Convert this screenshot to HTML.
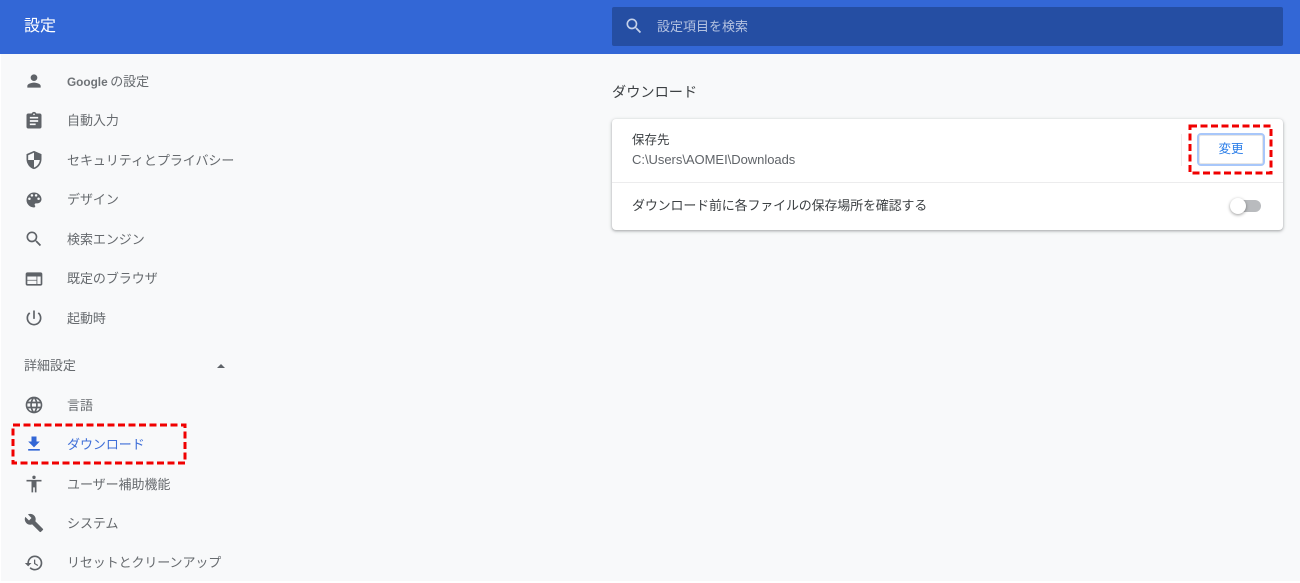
<!DOCTYPE html>
<html lang="ja">
<head>
<meta charset="utf-8">
<title>設定</title>
<style>
html,body{margin:0;padding:0}
body{width:1300px;height:583px;overflow:hidden;background:#f8f9fa;position:relative;font-family:"Liberation Sans","Noto Sans CJK JP",sans-serif;color:#5f6368}
.abs{position:absolute}
.hdr{left:0;top:0;width:1300px;height:54px;background:#3367d6}
.title{left:24px;top:16px;font-size:16px;line-height:22px;color:#fff}
.search{left:612px;top:7px;width:671px;height:39px;background:#254ea3;border-radius:2px}
.ph{left:657px;top:18px;font-size:13px;line-height:18px;color:#b4c2e0}
.it{position:absolute;left:67px;font-size:13px;line-height:18px;letter-spacing:-.05px;color:#666a6e;white-space:nowrap}
.ic{position:absolute;left:24px;width:20px;height:20px;fill:#5f6368}
.h2{left:612px;top:83px;font-size:14.2px;line-height:20px;color:#3c4043}
.card{left:612px;top:119px;width:671px;height:111px;background:#fff;border-radius:4px;box-shadow:0 1px 2px rgba(60,64,67,.3),0 1px 3px 1px rgba(60,64,67,.15)}
.t1{left:632px;font-size:12.5px;line-height:18px;color:#3c4043;white-space:nowrap}
.btn{left:1197px;top:133px;width:64px;height:29px;border:2px solid #a8c7fa;border-radius:4px;background:#fff;color:#2a7de8;font-size:12.5px;line-height:29px;text-align:center;box-sizing:content-box;box-shadow:inset 0 0 0 1px #e6e6e6}
</style>
</head>
<body>
<div class="abs hdr"></div>
<div class="abs title">設定</div>
<div class="abs search"></div>
<svg class="abs" style="left:624px;top:16px;fill:#c6d2ea" width="20" height="20" viewBox="0 0 24 24"><path d="M15.5 14h-.79l-.28-.27A6.47 6.47 0 0 0 16 9.5 6.5 6.5 0 1 0 9.500 16c1.610 0 3.090-.59 4.230-1.570l.27.28v.79l5 4.990L20.490 19l-4.990-5zm-6 0C7.010 14 5 11.990 5 9.500S7.010 5 9.500 5 14 7.010 14 9.500 11.990 14 9.500 14z"/></svg>
<div class="abs ph">設定項目を検索</div>

<svg class="ic" style="top:71px" viewBox="0 0 24 24"><path d="M12 12c2.210 0 4-1.790 4-4s-1.790-4-4-4-4 1.790-4 4 1.790 4 4 4zm0 2c-2.670 0-8 1.340-8 4v2h16v-2c0-2.660-5.330-4-8-4z"/></svg>
<div class="it" style="top:73px;word-spacing:-1px"><b style="font-weight:700;font-size:11.8px;letter-spacing:0;color:#6f7377">Google</b> の設定</div>

<svg class="ic" style="top:111px" viewBox="0 0 24 24"><path d="M19 3h-4.180C14.400 1.840 13.300 1 12 1s-2.400.84-2.820 2H5c-1.100 0-2 .9-2 2v14c0 1.100.9 2 2 2h14c1.100 0 2-.9 2-2V5c0-1.100-.9-2-2-2zm-7 0c.55 0 1 .45 1 1s-.45 1-1 1-1-.45-1-1 .45-1 1-1zm2 14H7v-2h7v2zm3-4H7v-2h10v2zm0-4H7V7h10v2z"/></svg>
<div class="it" style="top:112px">自動入力</div>

<svg class="ic" style="top:150px" viewBox="0 0 24 24"><path d="M12 1 3 5v6c0 5.550 3.840 10.740 9 12 5.160-1.260 9-6.450 9-12V5l-9-4zm0 10.990h7c-.53 4.120-3.280 7.790-7 8.940V12H5V6.300l7-3.110v8.800z"/></svg>
<div class="it" style="top:152px">セキュリティとプライバシー</div>

<svg class="ic" style="top:190px" viewBox="0 0 24 24"><path d="M12 3a9 9 0 0 0 0 18c.83 0 1.500-.67 1.500-1.500 0-.39-.15-.74-.39-1.010-.23-.26-.38-.61-.38-.99 0-.83.67-1.500 1.500-1.500H16c2.760 0 5-2.240 5-5 0-4.420-4.030-8-9-8zm-5.500 9a1.500 1.500 0 1 1 0-3 1.500 1.500 0 0 1 0 3zm3-4a1.500 1.500 0 1 1 0-3 1.500 1.500 0 0 1 0 3zm5 0a1.500 1.500 0 1 1 0-3 1.500 1.500 0 0 1 0 3zm3 4a1.500 1.500 0 1 1 0-3 1.500 1.500 0 0 1 0 3z"/></svg>
<div class="it" style="top:191px">デザイン</div>

<svg class="ic" style="top:229px" viewBox="0 0 24 24"><path d="M15.500 14h-.79l-.28-.27A6.470 6.470 0 0 0 16 9.500 6.500 6.500 0 1 0 9.500 16c1.610 0 3.090-.59 4.230-1.570l.27.28v.79l5 4.990L20.490 19l-4.990-5zm-6 0C7.010 14 5 11.990 5 9.500S7.010 5 9.500 5 14 7.010 14 9.500 11.990 14 9.500 14z"/></svg>
<div class="it" style="top:231px">検索エンジン</div>

<svg class="ic" style="top:269px" viewBox="0 0 24 24"><path d="M20 4H4c-1.100 0-2 .9-2 2v12c0 1.100.9 2 2 2h16c1.100 0 2-.9 2-2V6c0-1.100-.9-2-2-2zm-5 14H4v-4h11v4zm0-5H4V9h11v4zm5 5h-4V9h4v9z"/></svg>
<div class="it" style="top:270px">既定のブラウザ</div>

<svg class="ic" style="top:308px" viewBox="0 0 24 24"><path d="M13 3h-2v10h2V3zm4.830 2.170-1.420 1.420A6.920 6.920 0 0 1 19 12c0 3.870-3.130 7-7 7s-7-3.130-7-7c0-2.280 1.090-4.300 2.580-5.420L6.170 5.170A8.930 8.930 0 0 0 3 12a9 9 0 0 0 18 0c0-2.740-1.230-5.180-3.170-6.830z"/></svg>
<div class="it" style="top:310px">起動時</div>

<div class="it" style="left:24px;top:357px">詳細設定</div>
<svg class="abs" style="left:216px;top:363px" width="10" height="6" viewBox="0 0 10 6"><path d="M1 5 5 1l4 4z" fill="#5f6368"/></svg>

<svg class="ic" style="top:395px" viewBox="0 0 24 24"><path d="M11.990 2C6.470 2 2 6.480 2 12s4.470 10 9.990 10C17.520 22 22 17.520 22 12S17.520 2 11.990 2zm6.930 6h-2.950a15.650 15.650 0 0 0-1.380-3.560A8.030 8.030 0 0 1 18.920 8zM12 4.040c.83 1.200 1.480 2.530 1.910 3.960h-3.820c.43-1.430 1.080-2.760 1.910-3.960zM4.260 14C4.100 13.360 4 12.690 4 12s.1-1.360.26-2h3.380c-.08.66-.14 1.320-.14 2s.06 1.340.14 2H4.260zm.82 2h2.950c.32 1.250.78 2.450 1.380 3.560A7.987 7.987 0 0 1 5.080 16zm2.950-8H5.080a7.987 7.987 0 0 1 4.330-3.560A15.650 15.650 0 0 0 8.030 8zM12 19.960c-.83-1.200-1.480-2.530-1.910-3.960h3.820c-.43 1.430-1.080 2.760-1.910 3.960zM14.340 14H9.660c-.09-.66-.16-1.320-.16-2s.07-1.350.16-2h4.680c.09.65.16 1.320.16 2s-.07 1.340-.16 2zm.25 5.560c.6-1.110 1.060-2.310 1.380-3.560h2.950a8.030 8.030 0 0 1-4.330 3.560zM16.360 14c.08-.66.14-1.320.14-2s-.06-1.340-.14-2h3.380c.16.64.26 1.310.26 2s-.1 1.360-.26 2h-3.380z"/></svg>
<div class="it" style="top:397px">言語</div>

<svg class="ic" style="top:434px;fill:#3367d6" viewBox="0 0 24 24"><path d="M19 9h-4V3H9v6H5l7 7 7-7zM5 18v2h14v-2H5z"/></svg>
<div class="it" style="top:436px;color:#3f6fd8">ダウンロード</div>

<svg class="ic" style="top:474px" viewBox="0 0 24 24"><path d="M12 2a2 2 0 1 1 0 4 2 2 0 0 1 0-4zm9 7h-6v13h-2v-6h-2v6H9V9H3V7h18v2z"/></svg>
<div class="it" style="top:476px">ユーザー補助機能</div>

<svg class="ic" style="top:513px" viewBox="0 0 24 24"><path d="M22.700 19 13.600 9.900c.9-2.300.4-5-1.500-6.900-2-2-5-2.400-7.400-1.300L9 6 6 9 1.600 4.700C.4 7.100.9 10.100 2.900 12.100c1.900 1.900 4.600 2.400 6.900 1.500l9.100 9.100c.4.400 1 .4 1.400 0l2.300-2.300c.5-.4.5-1.100.1-1.400z"/></svg>
<div class="it" style="top:515px">システム</div>

<svg class="ic" style="top:553px" viewBox="0 0 24 24"><path d="M13 3a9 9 0 0 0-9 9H1l3.890 3.890.07.14L9 12H6c0-3.870 3.130-7 7-7s7 3.130 7 7-3.130 7-7 7c-1.930 0-3.680-.79-4.940-2.060l-1.420 1.420A8.954 8.954 0 0 0 13 21a9 9 0 0 0 0-18zm-1 5v5l4.280 2.540.72-1.210-3.500-2.080V8H12z"/></svg>
<div class="it" style="top:554px;letter-spacing:-.1px">リセットとクリーンアップ</div>

<div class="abs h2">ダウンロード</div>
<div class="abs card"></div>
<div class="abs t1" style="top:131px">保存先</div>
<div class="abs t1" style="top:151px;color:#5f6368;font-size:13px;letter-spacing:-.03px">C:\Users\AOMEI\Downloads</div>
<div class="abs" style="left:612px;top:182px;width:671px;height:1px;background:#ececed"></div>
<div class="abs" style="left:1181px;top:134px;width:1px;height:32px;background:#ececec"></div>
<div class="abs t1" style="top:197px;font-size:13px;letter-spacing:-.17px">ダウンロード前に各ファイルの保存場所を確認する</div>
<div class="abs btn">変更</div>
<div class="abs" style="left:1232px;top:200px;width:29px;height:12px;border-radius:6px;background:#b9bbbe"></div>
<div class="abs" style="left:1230px;top:198px;width:16px;height:16px;border-radius:50%;background:#fff;box-shadow:0 1px 3px rgba(0,0,0,.4)"></div>

<div class="abs" style="left:0;top:54px;width:1px;height:529px;background:#fff"></div>
<div class="abs" style="left:0;top:581px;width:1300px;height:2px;background:#fff"></div>

<svg class="abs" style="left:0;top:0" width="1300" height="583" fill="none">
<rect x="13" y="425" width="172" height="38" stroke="#f00000" stroke-width="3" stroke-dasharray="7 3.500"/>
<rect x="1190" y="126" width="81" height="47" stroke="#f00000" stroke-width="3" stroke-dasharray="7 3.500"/>
</svg>
</body>
</html>
